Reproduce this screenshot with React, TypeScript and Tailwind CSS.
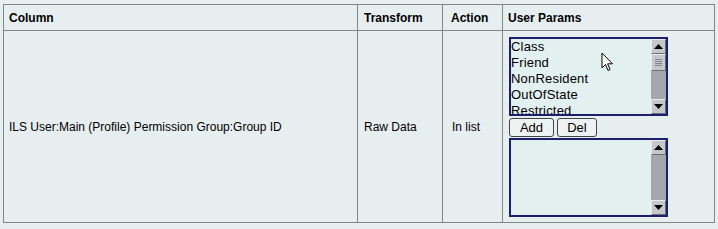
import React from "react";

const items = ["Class", "Friend", "NonResident", "OutOfState", "Restricted"];

function Arrow({ up }: { up?: boolean }) {
  return (
    <div className="h-[15px] w-full flex items-center justify-center bg-[#c4c8cc] border border-[#6a6e74] border-t-[#e8ecee] border-l-[#e8ecee]">
      <svg width="9" height="5" viewBox="0 0 9 5">
        {up ? <polygon points="4.5,0 9,5 0,5" fill="#000" /> : <polygon points="0,0 9,0 4.5,5" fill="#000" />}
      </svg>
    </div>
  );
}

function ListBox({ options, thumb }: { options: string[]; thumb?: boolean }) {
  return (
    <div className="flex h-[79px] w-[159px] border-2 border-[#1e1e6e] bg-[#e2f0f0] overflow-hidden">
      <div className="flex-1 overflow-hidden leading-[16px]">
        {options.map((o) => (
          <div key={o} className="text-[13px] tracking-[0.2px] text-black whitespace-nowrap">
            {o}
          </div>
        ))}
      </div>
      <div className="w-[15px] flex flex-col bg-[#a4a8ac]">
        <Arrow up />
        <div className="flex-1 flex flex-col">
          {thumb && (
            <div className="h-[17px] bg-[#c4c8cc] border border-[#6a6e74] border-t-[#e8ecee] border-l-[#e8ecee] flex flex-col items-center justify-center gap-[1px]">
              <div className="w-[7px] h-[1px] bg-[#80868c]" />
              <div className="w-[7px] h-[1px] bg-[#80868c]" />
              <div className="w-[7px] h-[1px] bg-[#80868c]" />
              <div className="w-[7px] h-[1px] bg-[#80868c]" />
            </div>
          )}
        </div>
        <Arrow />
      </div>
    </div>
  );
}

export default function App() {
  return (
    <div
      className="relative w-[718px] h-[229px] bg-[#e7eef0] pt-[4px] pl-[3px] text-black"
      style={{ fontFamily: '"Liberation Sans", Arial, sans-serif' }}
    >
      <table className="w-[711px] border-collapse table-fixed">
        <colgroup>
          <col className="w-[354px]" />
          <col className="w-[85px]" />
          <col className="w-[60px]" />
          <col className="w-[212px]" />
        </colgroup>
        <thead>
          <tr className="h-[26px]">
            <th className="border border-[#7d8889] text-left font-bold text-[12px] pl-[5px]">Column</th>
            <th className="border border-[#7d8889] text-left font-bold text-[12px] pl-[6px]">Transform</th>
            <th className="border border-[#7d8889] text-left font-bold text-[12px] pl-[8px]">Action</th>
            <th className="border border-[#7d8889] text-left font-bold text-[12px] pl-[5px]">User Params</th>
          </tr>
        </thead>
        <tbody>
          <tr className="h-[192px]">
            <td className="border border-[#7d8889] text-[12px] pl-[5px] align-middle">
              ILS User:Main (Profile) Permission Group:Group ID
            </td>
            <td className="border border-[#7d8889] text-[12px] pl-[6px] align-middle">Raw Data</td>
            <td className="border border-[#7d8889] text-[12px] pl-[9px] align-middle">In list</td>
            <td className="border border-[#7d8889] pl-[6px] align-top pt-[6px]">
              <ListBox options={items} thumb />
              <div className="flex gap-[3px] mt-[2px] mb-[1px]">
                <button className="w-[45px] h-[19px] border border-[#404448] rounded-[3px] bg-[#eef2f2] text-[13px] leading-none">
                  Add
                </button>
                <button className="w-[40px] h-[19px] border border-[#404448] rounded-[3px] bg-[#eef2f2] text-[13px] leading-none">
                  Del
                </button>
              </div>
              <ListBox options={[]} />
            </td>
          </tr>
        </tbody>
      </table>
      <svg className="absolute left-[601px] top-[52px]" width="13" height="20" viewBox="0 0 13 20">
        <polygon points="1,1 1,16 4.5,12.5 7,18.5 9,17.5 6.6,11.8 11.5,11.8" fill="#fff" stroke="#000" strokeWidth="1" strokeLinejoin="miter" />
      </svg>
    </div>
  );
}
